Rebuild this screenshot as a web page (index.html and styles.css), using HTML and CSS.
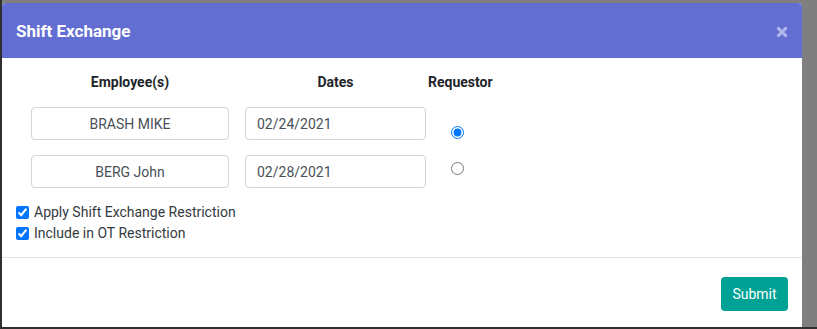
FILE: index.html
```html
<!DOCTYPE html>
<html lang="en">
<head>
    <meta charset="UTF-8">
    <meta name="viewport" content="width=device-width, initial-scale=1.0">
    <title>Shift Exchange</title>
    <link rel="stylesheet" href="styles.css">
</head>
<body>

<div class="frame">
    <div class="modal">
        <div class="modal-header">
            <h5 class="modal-title">Shift Exchange</h5>
            <button class="close" type="button" aria-label="Close">
                <svg width="12" height="12" viewBox="0 0 12 12">
                    <path d="M1.5 1.5 L10.5 10.5 M10.5 1.5 L1.5 10.5" stroke="currentColor" stroke-width="3" stroke-linecap="butt"/>
                </svg>
            </button>
        </div>

        <div class="modal-body">
            <div class="exchange-grid">
                <div class="col-head name-col">Employee(s)</div>
                <div class="col-head date-col">Dates</div>
                <div class="col-head req-col">Requestor</div>

                <input class="field name-col name-field" type="text" value="BRASH MIKE" readonly>
                <input class="field date-col" type="text" value="02/24/2021">
                <div class="req-col radio-cell first"><input type="radio" name="requestor" checked></div>

                <input class="field name-col name-field" type="text" value="BERG John" readonly>
                <input class="field date-col" type="text" value="02/28/2021">
                <div class="req-col radio-cell"><input type="radio" name="requestor"></div>
            </div>

            <label class="check"><input type="checkbox" checked> Apply Shift Exchange Restriction</label>
            <label class="check"><input type="checkbox" checked> Include in OT Restriction</label>
        </div>

        <div class="modal-footer">
            <button class="btn-submit" type="button">Submit</button>
        </div>
    </div>
</div>

</body>
</html>
```

FILE: styles.css
```css
body {
    margin: 0;
    padding: 0;
    background-color: #7f7f7f;
    font-family: Roboto, "Liberation Sans", sans-serif;
    color: #212529;
}
.frame {
    height: 329px;
    box-sizing: border-box;
    padding-top: 3px;
    border-left: 2px solid #2f2f2f;
    border-bottom: 2px solid #2f2f2f;
}
.modal {
    width: 800px;
    height: 324px;
    background-color: white;
    border-radius: 4px 4px 0 0;
    overflow: hidden;
    display: flex;
    flex-direction: column;
}
.modal-header {
    height: 55px;
    background-color: #636ed2;
    display: flex;
    align-items: center;
    justify-content: space-between;
    padding: 0 14px 0 14px;
}
.modal-title {
    margin: 0;
    color: white;
    font-size: 17px;
    font-weight: 700;
}
.close {
    background: none;
    border: none;
    padding: 0;
    margin-top: 2px;
    color: #b4b9ec;
    display: flex;
    cursor: pointer;
}
.modal-body {
    padding: 14px 14px 13px 14px;
    border-bottom: 1px solid #dee2e6;
}
.exchange-grid {
    display: grid;
    grid-template-columns: 15px 198px 16px 181px 2px 64px;
    grid-template-rows: 20px 33px 33px;
    row-gap: 15px;
}
.name-col {
    grid-column: 2;
}
.date-col {
    grid-column: 4;
}
.req-col {
    grid-column: 6;
}
.col-head {
    font-size: 14px;
    font-weight: 700;
    line-height: 20px;
    text-align: center;
    white-space: nowrap;
}
.field {
    box-sizing: border-box;
    width: 100%;
    height: 33px;
    margin: 0;
    padding: 0 11px;
    border: 1px solid #ced4da;
    border-radius: 4px;
    font-family: Roboto, "Liberation Sans", sans-serif;
    font-size: 14px;
    color: #495057;
    outline: none;
}
.name-field {
    text-align: center;
}
.radio-cell {
    display: flex;
    justify-content: center;
    align-items: flex-start;
    padding-top: 7px;
    padding-right: 6px;
}
.radio-cell.first {
    padding-top: 19px;
}
.radio-cell input {
    margin: 0;
    width: 13px;
    height: 13px;
}
.check {
    display: flex;
    align-items: center;
    gap: 5px;
    font-size: 14px;
    line-height: 21px;
    color: #343a40;
}
.exchange-grid + .check {
    margin-top: 14px;
}
.check input {
    margin: 0;
    width: 13px;
    height: 13px;
}
.modal-footer {
    display: flex;
    justify-content: flex-end;
    padding: 19px 14px 0 14px;
}
.btn-submit {
    width: 67px;
    height: 34px;
    background-color: #00a295;
    color: white;
    border: none;
    border-radius: 4px;
    font-family: Roboto, "Liberation Sans", sans-serif;
    font-size: 14px;
    cursor: pointer;
}
```
